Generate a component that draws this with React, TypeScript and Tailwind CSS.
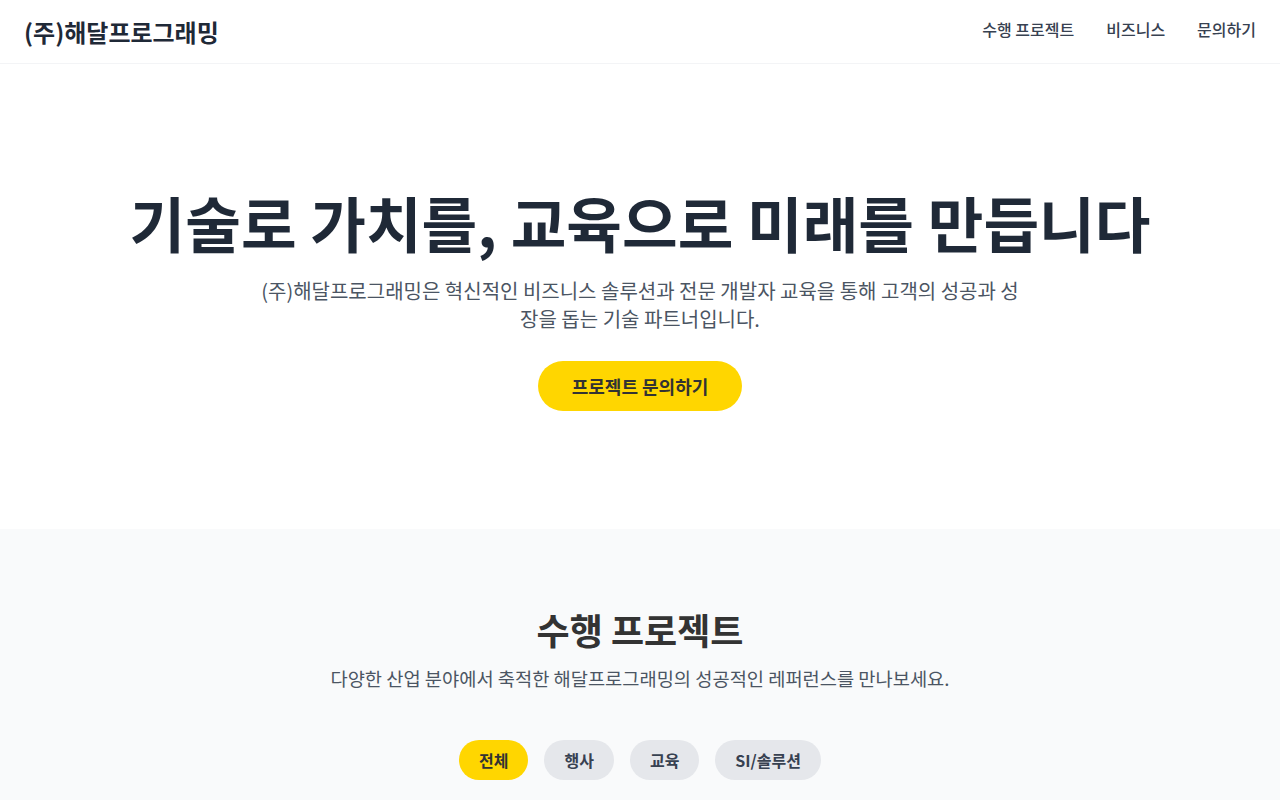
import React, { useState } from 'react'

const Tabs = ['전체', '행사', '교육', 'SI/솔루션']

const NavItems = ['수행 프로젝트', '비즈니스', '문의하기']

function App() {
    const [tab, setTab] = useState('전체')

    return (
        <div className="min-h-screen bg-white font-['Noto_Sans_CJK_KR','Noto_Sans',sans-serif]">
            <header className="h-16 px-6 flex items-center justify-between border-b border-gray-100 bg-white">
                <span className="text-2xl font-bold text-[#1f2937]">(주)해달프로그래밍</span>
                <nav className="flex items-center gap-8 mb-[5px]">
                    {NavItems.map((item) => (
                        <a key={item} className="text-base font-medium text-[#374151]">{item}</a>
                    ))}
                </nav>
            </header>

            <section className="pt-[128px] pb-[118px] flex flex-col items-center text-center">
                <h1 className="text-[60.5px] leading-none font-bold text-[#1f2937] mb-6">
                    기술로 가치를, 교육으로 미래를 만듭니다
                </h1>
                <p className="max-w-3xl text-xl text-[#4b5563] mb-7">
                    (주)해달프로그래밍은 혁신적인 비즈니스 솔루션과 전문 개발자 교육을 통해 고객의 성공과 성장을 돕는 기술 파트너입니다.
                </p>
                <button className="h-[50px] px-[34px] rounded-full bg-[#ffd600] text-lg font-bold text-[#333333]">
                    프로젝트 문의하기
                </button>
            </section>

            <section className="bg-[#f9fafb] pt-20 pb-20 flex flex-col items-center text-center">
                <h2 className="text-4xl font-bold text-[#333333] mb-[15px]">수행 프로젝트</h2>
                <p className="text-[18.7px] leading-7 text-[#4b5563] mb-12">
                    다양한 산업 분야에서 축적한 해달프로그래밍의 성공적인 레퍼런스를 만나보세요.
                </p>
                <div className="flex items-center gap-4">
                    {Tabs.map((t) => (
                        <button
                            key={t}
                            onClick={() => setTab(t)}
                            className={
                                tab === t
                                    ? 'h-10 px-5 rounded-full bg-[#ffd600] text-base font-semibold text-[#333333]'
                                    : 'h-10 px-5 rounded-full bg-[#e5e7eb] text-base font-semibold text-[#374151]'
                            }
                        >
                            {t}
                        </button>
                    ))}
                </div>
            </section>
        </div>
    )
}

export default App
